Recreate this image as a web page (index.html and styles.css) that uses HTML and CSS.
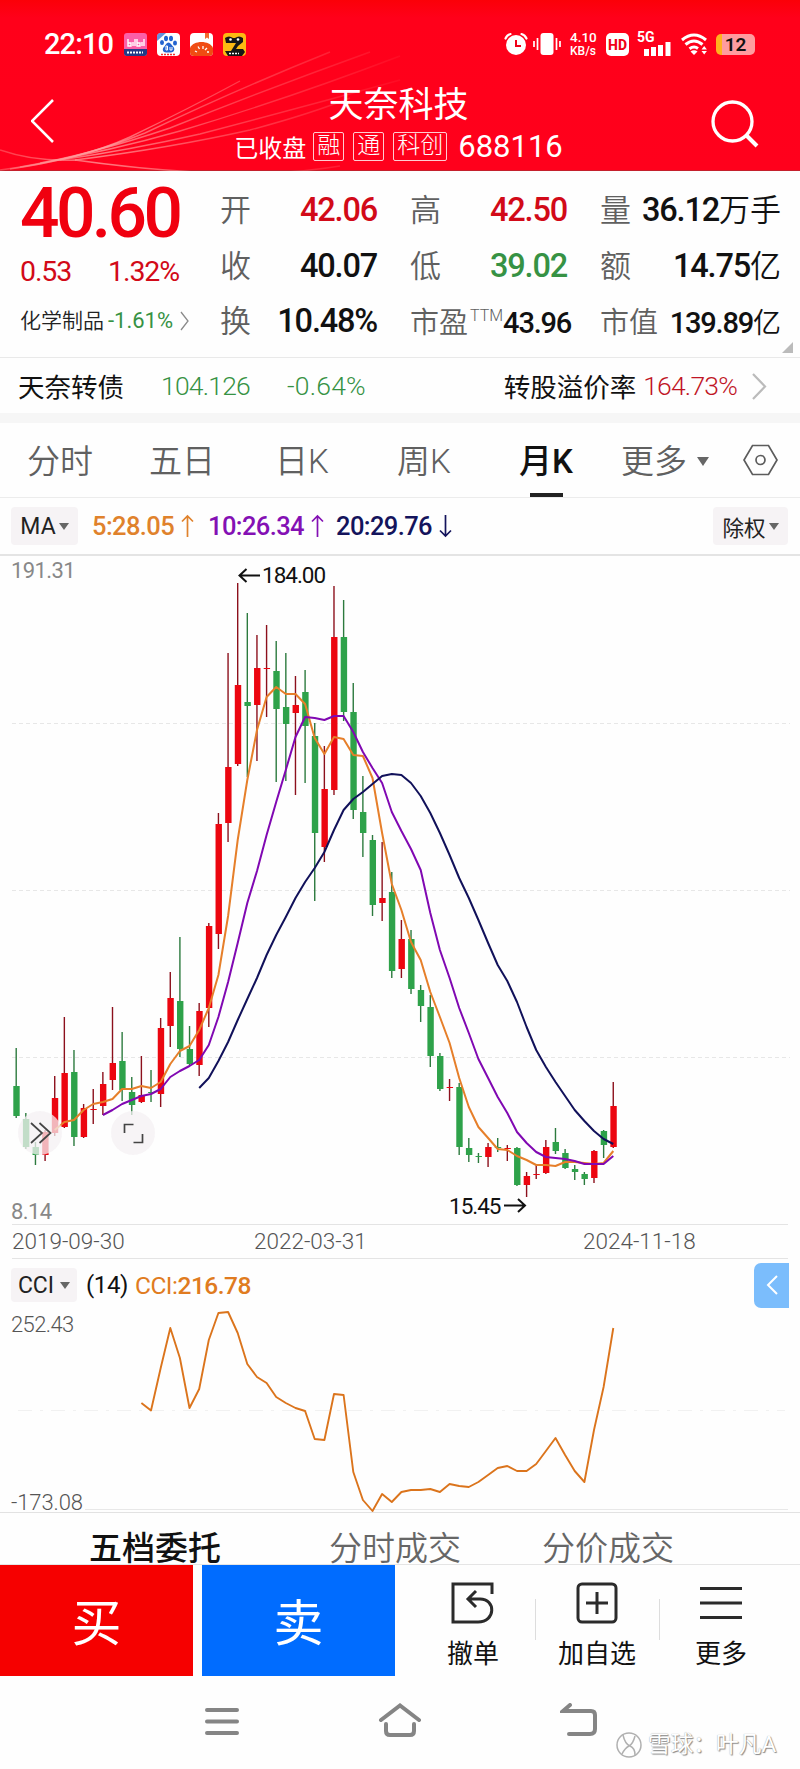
FILE: index.html
```
<!DOCTYPE html>
<html lang="zh-CN">
<head>
    <meta charset="UTF-8">
    <meta name="viewport" content="width=device-width, initial-scale=1.0">
    <title>天奈科技 688116</title>
    <link rel="stylesheet" href="styles.css">
</head>
<body>
    <header>
        <svg class="header-lines" width="800" height="171" viewBox="0 0 800 171">
            <defs>
                <linearGradient id="fade" gradientUnits="userSpaceOnUse" x1="0" y1="0" x2="400" y2="0">
                    <stop offset="0" stop-color="#ff9090" stop-opacity=".4"/>
                    <stop offset=".25" stop-color="#ffa0a0" stop-opacity=".75"/>
                    <stop offset=".6" stop-color="#ff9090" stop-opacity=".4"/>
                    <stop offset="1" stop-color="#ff9090" stop-opacity=".08"/>
                </linearGradient>
            </defs>
            <path d="M0 150 Q35 162 75 160 Q240 183 340 166"/>
            <path d="M0 170 Q80 160 130 137 Q190 108 240 81"/>
            <path d="M10 169 Q80 159 145 133 Q240 88 330 52"/>
            <path d="M20 167 Q90 155 170 128 Q270 88 370 52"/>
            <path d="M40 163 Q110 151 180 131 Q290 98 400 56"/>
            <path d="M60 160 Q130 150 200 134 Q300 108 400 80"/>
            <path d="M75 160 Q170 148 250 130 Q310 114 350 98"/>
        </svg>
        <div class="status-bar">
            <span class="time">22:10</span>
            <div class="apps">
                <svg width="23" height="23" viewBox="0 0 23 23">
                    <rect width="23" height="23" rx="3" fill="#fb5fa8"/>
                    <path d="M0 16h23v4a3 3 0 0 1-3 3H3a3 3 0 0 1-3-3z" fill="#243a86"/>
                    <path d="M4 6v7h3v-3H4M9 9v4M11 6v7M13 6v7h3v-3h-3M18 9v4M20 6v7" stroke="#fff" fill="none" stroke-width="1.4"/>
                    <path d="M3 19.500h16" stroke="#fff" stroke-width="2" stroke-dasharray="2 1"/>
                </svg>
                <svg width="23" height="23" viewBox="0 0 23 23">
                    <rect width="23" height="23" rx="4" fill="#fff"/>
                    <g fill="#2463cf">
                        <path d="M0 4a4 4 0 0 1 4-4h5L0 8z" opacity=".7"/>
                        <ellipse cx="5" cy="9.500" rx="2" ry="2.600"/>
                        <ellipse cx="9" cy="5.500" rx="2" ry="2.800"/>
                        <ellipse cx="14" cy="5.500" rx="2" ry="2.800"/>
                        <ellipse cx="18" cy="10" rx="2" ry="2.600"/>
                        <path d="M11.500 9.500c2 0 3 2.500 5 4.500 2 2.500 0 5.500-2.500 5.500H9c-3 0-4-3-2.500-5 2-2 3-5 5-5z"/>
                    </g>
                    <path d="M9 13v4h1.500v-4zM13 14v3h2v-3" fill="none" stroke="#fff"/>
                    <path d="M4 21.500h15" stroke="#e33" stroke-width="1.500" stroke-dasharray="2 1"/>
                </svg>
                <svg width="23" height="23" viewBox="0 0 23 23">
                    <rect width="23" height="23" rx="4" fill="#fff"/>
                    <path d="M15 0h4v6l-2-1.500L15 6z" fill="#f26a2c"/>
                    <path d="M0 15C3 7 20 7 23 15v4a4 4 0 0 1-4 4H4a4 4 0 0 1-4-4z" fill="#f04c12"/>
                    <path d="M5 18l2 1M8 13.500l1.500 2.500M13 13v3M17 15l-2 2M19 19h-2" stroke="#fff" stroke-width="1.300"/>
                </svg>
                <svg width="23" height="23" viewBox="0 0 23 23">
                    <rect width="23" height="23" rx="4" fill="#fdb912"/>
                    <path d="M2 5q4-3 8 0h2q4-3 8 0v4l-5 4-2 3 7 0 2 3-3 4H5l-3-5 6 0 5-8H3z" fill="#161616"/>
                    <circle cx="7.500" cy="6.500" r="1.300" fill="#fff"/>
                    <circle cx="15" cy="6.500" r="1.300" fill="#fff"/>
                    <path d="M6 20.500h10" stroke="#fff" stroke-width="1.500" stroke-dasharray="2 1"/>
                </svg>
            </div>
            <div class="system">
                <svg width="24" height="24" viewBox="0 0 24 24">
                    <circle cx="12" cy="13" r="10" fill="#fff"/>
                    <path d="M1.500 6.500Q3 3 6.500 2M17.500 2Q21 3 22.500 6.500" stroke="#fff" stroke-width="2.200" fill="none" stroke-linecap="round"/>
                    <path d="M12 8v6h5" stroke="#f00018" stroke-width="2" fill="none"/>
                </svg>
                <svg class="vibrate" width="28" height="24" viewBox="0 0 28 24">
                    <rect x="7.500" y="1" width="13" height="22" rx="3" fill="#fff"/>
                    <path d="M4.500 6v12M1 9v6M23.500 6v12M27 9v6" stroke="#fff" stroke-width="1.700"/>
                </svg>
                <div class="speed"><span>4.10</span><span>KB/s</span></div>
                <span class="hd">HD</span>
                <div class="signal">
                    <span>5G</span>
                    <svg width="27" height="14" viewBox="0 0 27 14">
                        <path d="M0 7h5v7H0zM7 5h5v9H7zM14 3h5v11h-5zM21.500 0h5v14h-5z" fill="#fff"/>
                    </svg>
                </div>
                <svg class="wifi" width="29" height="24" viewBox="0 0 29 24">
                    <path d="M2 8Q14 -2 26 8M5.500 12.500Q14 5.500 22.500 12.500M9.500 16.800Q14 13.500 18 16.500" stroke="#fff" stroke-width="3" fill="none"/>
                    <path d="M10.500 19.500Q14 17 17.500 19.500L14 23z" fill="#fff"/>
                    <path d="M21.500 17.500l2.700-3.500 2.700 3.500zM21.500 19h5.400l-2.700 3.500z" fill="#fff"/>
                </svg>
                <div class="battery">12</div>
            </div>
        </div>
        <div class="title-bar">
            <svg width="24" height="44" viewBox="0 0 24 44"><path d="M22 1L1 22l21 21" fill="none" stroke="#fff" stroke-width="2.500"/></svg>
            <div class="title">
                <h1>天奈科技</h1>
                <div class="subtitle">
                    <span>已收盘</span>
                    <i>融</i><i>通</i><i>科创</i>
                    <b>688116</b>
                </div>
            </div>
            <svg width="48" height="48" viewBox="0 0 48 48">
                <circle cx="21.500" cy="21.500" r="19.500" fill="none" stroke="#fff" stroke-width="3.300"/>
                <path d="M35 35l11 11" stroke="#fff" stroke-width="4"/>
            </svg>
        </div>
    </header>

    <section class="quote">
        <div class="price">
            <div class="last up">40.60</div>
            <div class="change up"><span>0.53</span><span>1.32%</span></div>
            <div class="sector">化学制品<span class="down">-1.61%</span>
                <svg width="9" height="20" viewBox="0 0 9 20"><path d="M1 1l7 9-7 9" fill="none" stroke="#8a8a8a" stroke-width="1.300"/></svg>
            </div>
        </div>
        <div class="stats">
            <div><label>开</label><b class="up">42.06</b></div>
            <div><label>高</label><b class="up">42.50</b></div>
            <div><label>量</label><b>36.12<em>万手</em></b></div>
            <div><label>收</label><b>40.07</b></div>
            <div><label>低</label><b class="down">39.02</b></div>
            <div><label>额</label><b>14.75<em>亿</em></b></div>
            <div><label>换</label><b>10.48%</b></div>
            <div class="small"><label>市盈<sup>TTM</sup></label><b>43.96</b></div>
            <div class="small"><label>市值</label><b>139.89<em>亿</em></b></div>
        </div>
        <span class="corner"></span>
    </section>

    <section class="bond">
        <span class="bond-name">天奈转债</span>
        <span class="bond-price down">104.126</span>
        <span class="bond-change down">-0.64%</span>
        <span class="premium">转股溢价率</span>
        <span class="premium-value">164.73%</span>
        <svg width="15" height="27" viewBox="0 0 15 27"><path d="M1 1l12 12.500L1 26" fill="none" stroke="#bbb" stroke-width="2.200"/></svg>
    </section>

    <nav class="periods">
        <span>分时</span>
        <span>五日</span>
        <span>日K</span>
        <span>周K</span>
        <span class="active">月K</span>
        <span>更多<i class="caret"></i></span>
        <svg width="35" height="32" viewBox="0 0 35 32">
            <path d="M9.500 1.500h16L34 16l-8.500 14.500h-16L1 16z" fill="none" stroke="#5c5c5c" stroke-width="1.700"/>
            <circle cx="17.500" cy="16" r="4.500" fill="none" stroke="#5c5c5c" stroke-width="1.700"/>
        </svg>
    </nav>

    <section class="ma-bar">
        <button class="chip">MA<i class="caret"></i></button>
        <span class="ma ma5">5:28.05<svg width="13" height="24" viewBox="0 0 13 24"><path d="M6.500 23V2M1 7.500L6.500 2 12 7.500"/></svg></span>
        <span class="ma ma10">10:26.34<svg width="13" height="24" viewBox="0 0 13 24"><path d="M6.500 23V2M1 7.500L6.500 2 12 7.500"/></svg></span>
        <span class="ma ma20">20:29.76<svg width="13" height="24" viewBox="0 0 13 24"><path d="M6.500 1v21M1 16.500L6.500 22l5.500-5.500"/></svg></span>
        <button class="chip right">除权<i class="caret"></i></button>
    </section>

    <svg id="kline" class="kline" width="800" height="669" viewBox="0 556 800 669">
        <path class="grid" d="M12 723.500H790M12 890.500H790M12 1057.500H790"/>
        <g id="candles"></g>
        <g id="lines"></g>
        <text class="axis" x="11" y="578">191.31</text>
        <text class="axis" x="11" y="1218.500">8.14</text>
        <path class="arrow" d="M260 575.500H239M246.500 569l-7 6.500 7 6.500"/>
        <text class="mark" x="262" y="583">184.00</text>
        <text class="mark" x="449" y="1214">15.45</text>
        <path class="arrow" d="M504 1205.500h21M518 1199l7 6.500-7 6.500"/>
        <circle class="tool" cx="40" cy="1133" r="22"/>
        <path class="tool-icon" d="M31 1123l11 10-11 10M39.500 1123l11 10-11 10"/>
        <circle class="tool" cx="133" cy="1133" r="22"/>
        <path class="tool-icon" d="M124.500 1133v-8.500h9M142.500 1134v8.500h-9"/>
    </svg>

    <div class="dates"><span>2019-09-30</span><span>2022-03-31</span><span>2024-11-18</span></div>

    <section class="cci">
        <div class="cci-bar">
            <button class="chip">CCI<i class="caret"></i></button>
            <span class="param">(14)</span>
            <span class="value">CCI:<b>216.78</b></span>
            <div class="drawer">
                <svg width="12" height="20" viewBox="0 0 12 20"><path d="M11 1L2 10l9 9" fill="none" stroke="#fff" stroke-width="2"/></svg>
            </div>
        </div>
        <svg id="cci" class="cci-chart" width="800" height="205" viewBox="0 1307 800 205">
            <path class="grid long" d="M18 1410.500H785"/>
            <path class="base" d="M85 1509.500H788"/>
            <text class="axis dark" x="11" y="1332">252.43</text>
            <text class="axis dark low" x="11" y="1509.500">-173.08</text>
        </svg>
    </section>

    <nav class="detail-tabs">
        <span class="active">五档委托</span><span>分时成交</span><span>分价成交</span>
    </nav>

    <section class="actions">
        <button class="buy">买</button>
        <button class="sell">卖</button>
        <div class="action">
            <svg width="46" height="46" viewBox="0 0 46 46"><path d="M42 14V4H3v38h25c18 0 18-23 2-23H20M26 11l-8 8 8 8"/></svg>
            <span>撤单</span>
        </div>
        <div class="action">
            <svg width="46" height="46" viewBox="0 0 46 46"><rect x="4" y="4" width="38" height="38" rx="4"/><path d="M23 12v22M12 23h22"/></svg>
            <span>加自选</span>
        </div>
        <div class="action">
            <svg width="46" height="46" viewBox="0 0 46 46"><path d="M2 8.500h42M2 23h42M2 37.500h42"/></svg>
            <span>更多</span>
        </div>
    </section>

    <footer>
        <svg width="36" height="36" viewBox="0 0 36 36"><path d="M3 7h30M3 18.500h30M3 30h30"/></svg>
        <svg width="44" height="34" viewBox="0 0 44 34"><path d="M3 17L22 2.500 41 17M8 21v7q0 4 4 4h20q4 0 4-4v-7"/></svg>
        <svg width="38" height="36" viewBox="0 0 38 36"><path d="M10 2L3 8h28q4 0 4 4v14q0 5-5 5H9"/></svg>
        <div class="watermark">
            <svg width="28" height="28" viewBox="0 0 28 28"><circle cx="14" cy="14" r="12"/><path d="M8 4q2 9 7 11t5 9M20 5q-2 8-6 10t-7 8"/></svg>
            <span>雪球：叶凡A</span>
        </div>
    </footer>

    <script>
        // [最高, 实体上沿, 实体下沿, 最低, 涨1/跌0]
        const candles = [
            [1048, 1086, 1116, 1118, 0], [1113, 1119, 1147, 1149, 0], [1142, 1147, 1155, 1165, 0], [1130, 1132, 1155, 1161, 1],
            [1076, 1098, 1133, 1136, 1], [1017, 1073, 1127, 1128, 1], [1050, 1072, 1137, 1146, 0], [1104, 1108, 1137, 1138, 1],
            [1089, 1109, 1109, 1124, 1], [1072, 1084, 1106, 1115, 1], [1007, 1063, 1080, 1090, 1], [1032, 1061, 1090, 1101, 0],
            [1077, 1092, 1105, 1115, 0], [1056, 1095, 1102, 1103, 1], [1070, 1092, 1092, 1102, 0], [1018, 1028, 1094, 1107, 1],
            [972, 998, 1026, 1047, 1], [937, 1001, 1049, 1057, 0], [1026, 1049, 1064, 1065, 0], [1003, 1011, 1065, 1076, 1],
            [923, 926, 1008, 1027, 1], [813, 824, 934, 949, 1], [653, 767, 823, 842, 1], [583, 685, 764, 766, 1],
            [613, 702, 706, 777, 0], [635, 668, 705, 761, 1], [625, 668, 668, 717, 1], [641, 671, 709, 782, 0],
            [653, 707, 724, 781, 0], [676, 705, 713, 795, 1], [670, 692, 726, 783, 0], [723, 736, 833, 901, 0],
            [746, 789, 847, 862, 1], [586, 637, 790, 795, 1], [600, 637, 712, 721, 0], [683, 712, 810, 819, 0],
            [776, 812, 833, 857, 0], [835, 840, 905, 916, 0], [842, 898, 903, 921, 1], [872, 892, 971, 978, 0],
            [920, 939, 969, 978, 1], [930, 939, 989, 994, 0], [985, 990, 1006, 1022, 0], [995, 1007, 1056, 1067, 0],
            [1053, 1056, 1089, 1091, 0], [1079, 1087, 1087, 1101, 1], [1083, 1087, 1147, 1155, 0], [1138, 1148, 1155, 1162, 0],
            [1153, 1156, 1156, 1163, 0], [1143, 1147, 1157, 1167, 1], [1138, 1147, 1147, 1152, 0], [1145, 1148, 1148, 1161, 1],
            [1147, 1148, 1185, 1186, 0], [1172, 1176, 1185, 1197, 1], [1165, 1174, 1174, 1179, 1], [1140, 1147, 1173, 1174, 1],
            [1128, 1142, 1151, 1154, 0], [1149, 1153, 1168, 1169, 0], [1165, 1169, 1172, 1180, 0], [1172, 1174, 1179, 1185, 0],
            [1150, 1151, 1178, 1183, 1], [1130, 1131, 1145, 1158, 0], [1082, 1106, 1147, 1148, 1]
        ];
        const ma5 = [1130, 1122, 1120, 1110, 1104, 1102, 1099, 1089, 1089, 1086, 1088, 1082, 1064, 1051, 1046, 1030, 1008, 975, 916, 840, 780, 730, 697, 687, 694, 694, 704, 738, 754, 737, 739, 755, 756, 778, 833, 884, 910, 942, 960, 992, 1017, 1043, 1078, 1107, 1127, 1138, 1149, 1150, 1156, 1160, 1165, 1165, 1166, 1162, 1162, 1163, 1164, 1163, 1151];
        const ma10 = [1115, 1110, 1104, 1100, 1096, 1094, 1089, 1077, 1071, 1066, 1060, 1045, 1017, 982, 943, 903, 871, 835, 802, 770, 737, 717, 718, 720, 716, 716, 732, 752, 768, 783, 812, 831, 849, 870, 913, 950, 978, 1008, 1033, 1059, 1078, 1097, 1113, 1132, 1143, 1152, 1157, 1158, 1159, 1161, 1164, 1164, 1164, 1156];
        const ma20 = [1088, 1078, 1061, 1042, 1020, 999, 978, 955, 935, 917, 898, 882, 868, 852, 830, 810, 799, 792, 784, 776, 774, 775, 783, 796, 813, 833, 855, 878, 898, 920, 943, 965, 981, 1002, 1027, 1050, 1067, 1082, 1096, 1110, 1121, 1131, 1139, 1144];
        const cci = [1403, 1410.5, 1368, 1328, 1358, 1408, 1389, 1340, 1313, 1312, 1333, 1364, 1377, 1383, 1397, 1403, 1408, 1411, 1439, 1440, 1394, 1395, 1472, 1500, 1511, 1494, 1502, 1492, 1490, 1490, 1489, 1492, 1484, 1486, 1487, 1482, 1475, 1468, 1466, 1471, 1471, 1464, 1451, 1438, 1455, 1471, 1482, 1430, 1387, 1328];

        const x = (i) => 16.2 + i * 9.63;

        let html = '';
        candles.forEach(([high, top, bottom, low, up], i) => {
            const name = up ? 'rise' : 'fall';
            html += `<path class="wick ${name}" d="M${x(i)} ${high}V${low}"/>`;
            html += `<rect class="body ${name}" x="${x(i) - 2.9}" y="${top}" width="6.4" height="${Math.max(bottom - top, 1)}"/>`;
        });
        document.getElementById('candles').innerHTML = html;

        // 均线从右侧对齐到最后一根K线
        function line(data, name) {
            const start = candles.length - data.length;
            const points = data.map((y, i) => `${x(start + i).toFixed(1)},${y}`).join(' ');
            return `<polyline class="line ${name}" points="${points}"/>`;
        }
        document.getElementById('lines').innerHTML = line(ma5, 'l5') + line(ma10, 'l10') + line(ma20, 'l20');
        document.getElementById('cci').innerHTML += line(cci, 'lcci');
    </script>
</body>
</html>
```
FILE: styles.css
```
* {
    box-sizing: border-box;
}
body {
    margin: 0;
    width: 800px;
    height: 1769px;
    overflow: hidden;
    background-color: #fefefe;
    color: #111;
    font-family: Roboto, "Noto Sans CJK SC", sans-serif;
}
svg {
    display: block;
    flex-shrink: 0;
}
button {
    border: none;
    padding: 0;
    font-family: inherit;
}
i, em {
    font-style: normal;
}
.up {
    color: #d20a18;
}
.down {
    color: #369244;
}
.caret {
    display: inline-block;
    border: 5px solid transparent;
    border-top: 7px solid #666;
    border-bottom: none;
}

/* header */
header {
    position: relative;
    height: 171px;
    background: linear-gradient(#fb0008, #ff001a 18px, #ff001c);
    border-bottom: 1px solid #c4202c;
    color: white;
}
.header-lines {
    position: absolute;
    left: 0;
    top: 0;
    fill: none;
    stroke: url(#fade);
    stroke-width: 1.4;
}
.status-bar {
    position: relative;
    display: flex;
    align-items: center;
    height: 88px;
    padding: 0 45px 0 44px;
}
.time {
    width: 80px;
    font-size: 29px;
    font-weight: 500;
    letter-spacing: -0.9px;
}
.apps {
    display: flex;
    gap: 10px;
}
.system {
    display: flex;
    align-items: center;
    margin-left: auto;
}
.vibrate {
    margin-left: 5px;
}
.speed {
    display: flex;
    flex-direction: column;
    width: 28px;
    margin-left: 9px;
    font-size: 12px;
    line-height: 14px;
    font-weight: 500;
}
.speed span:first-child {
    font-size: 13.5px;
    line-height: 13px;
}
.hd {
    width: 23px;
    height: 23px;
    margin-left: 8px;
    border-radius: 5px;
    background-color: white;
    color: #f00018;
    font-size: 14px;
    font-weight: 800;
    line-height: 24px;
    text-align: center;
}
.signal {
    width: 35px;
    height: 24px;
    margin-left: 8px;
    font-size: 14px;
    font-weight: 700;
    line-height: 11px;
}
.signal span {
    display: block;
    height: 10px;
}
.signal svg {
    margin-left: 7px;
}
.wifi {
    margin-left: 8px;
}
.battery {
    width: 39px;
    height: 21px;
    margin-left: 7px;
    border-radius: 5px;
    background: linear-gradient(90deg, #ffb21e 6px, #ff9c9f 6px);
    color: #111;
    font-size: 19px;
    font-weight: 600;
    line-height: 21px;
    text-align: center;
}
.title-bar {
    position: relative;
    display: flex;
    justify-content: space-between;
    padding: 0 41px 0 31px;
}
.title-bar > svg:first-child {
    margin-top: 11px;
}
.title-bar > svg:last-child {
    margin-top: 12px;
}
.title {
    margin-left: 31px;
    text-align: center;
}
h1 {
    margin: -4px 0 0;
    font-size: 35px;
    font-weight: 400;
    line-height: 43px;
}
.subtitle {
    display: flex;
    align-items: center;
    height: 38px;
    font-size: 24px;
}
.subtitle i {
    height: 29px;
    margin-left: 9px;
    padding: 0 3px;
    border: 1.5px solid rgba(255, 255, 255, 0.8);
    border-radius: 2px;
    font-size: 23px;
    font-weight: 300;
    line-height: 26px;
}
.subtitle span + i {
    margin-left: 7px;
}
.subtitle b {
    margin-left: 11px;
    font-size: 31px;
    font-weight: 400;
}

/* quote */
.quote {
    position: relative;
    display: flex;
    height: 187px;
    padding: 12px 0 0 20px;
    border-bottom: 1px solid #e9e9e9;
}
.price {
    width: 200px;
}
.last {
    margin-top: 1px;
    color: #f0000f;
    font-size: 69.5px;
    font-weight: 500;
    line-height: 60px;
    letter-spacing: -3.6px;
}
.change {
    display: flex;
    justify-content: space-between;
    width: 159px;
    margin-top: 10px;
    font-size: 28.5px;
    line-height: 36px;
    letter-spacing: -1.1px;
}
.sector {
    display: flex;
    align-items: center;
    margin-top: 13px;
    font-size: 21px;
    font-weight: 350;
    line-height: 36px;
    color: #222;
}
.sector span {
    margin-left: 4px;
    font-size: 22px;
    font-weight: 400;
}
.sector svg {
    margin-left: 7px;
}
.stats {
    display: grid;
    grid-template-columns: 157px 157px 181px;
    grid-auto-rows: 55.5px;
    column-gap: 33px;
}
.stats div {
    display: flex;
    justify-content: space-between;
    align-items: center;
}
.stats label {
    color: #606060;
    font-size: 31px;
    font-weight: 350;
    line-height: 55px;
}
.stats b {
    font-size: 32.5px;
    font-weight: 500;
    line-height: 55px;
    letter-spacing: -1.2px;
    white-space: nowrap;
}
.stats em {
    font-size: 31px;
    font-weight: 350;
    line-height: 1;
    letter-spacing: 0;
}
.stats .small label {
    font-size: 29px;
    padding-top: 4px;
    line-height: 51px;
    white-space: nowrap;
}
.stats .small b {
    font-size: 29px;
    padding-top: 3px;
    line-height: 52px;
}
.stats .small em {
    font-size: 28px;
}
.stats sup {
    margin-left: 2px;
    font-size: 16px;
    line-height: 0;
    vertical-align: 12px;
}
.corner {
    position: absolute;
    right: 7px;
    bottom: 4px;
    border-left: 11px solid transparent;
    border-bottom: 11px solid #bbb;
}

/* bond */
.bond {
    display: flex;
    align-items: center;
    height: 65px;
    padding: 0 33px 0 18px;
    border-bottom: 10px solid #f6f6f6;
    font-size: 26.5px;
}
.bond-name {
    width: 143px;
}
.bond-price {
    width: 126px;
    letter-spacing: -0.8px;
    font-weight: 350;
}
.bond-change {
    letter-spacing: 0.2px;
    font-weight: 350;
}
.premium {
    margin-left: auto;
}
.premium-value {
    margin: 0 15px 0 7px;
    color: #c01525;
    font-weight: 350;
    letter-spacing: -0.8px;
}
.bond svg {
    margin-top: 2px;
}

/* periods */
.periods {
    display: flex;
    align-items: center;
    height: 75px;
    padding: 0 22px 0 27px;
    border-bottom: 1px solid #ececec;
    color: #606060;
    font-size: 33px;
    font-weight: 350;
    line-height: 74px;
}
.periods span {
    width: 122px;
    height: 74px;
    padding-top: 2px;
}
.periods span:nth-child(3) {
    padding-left: 4px;
}
.periods span:nth-child(4) {
    padding-left: 4px;
}
.periods .active {
    position: relative;
    width: 106px;
    padding-left: 4px;
    color: #111;
    font-weight: 500;
}
.periods .active::after {
    content: "";
    position: absolute;
    left: 15px;
    bottom: 0;
    width: 33px;
    height: 4px;
    background-color: #222;
}
.periods .caret {
    margin-left: 10px;
    border-width: 9px 6px 0;
    vertical-align: 7px;
}

/* moving averages */
.ma-bar {
    display: flex;
    align-items: center;
    height: 58px;
    padding: 0 12px 0 11px;
    border-bottom: 2px solid #e4e4e4;
}
.chip {
    display: flex;
    align-items: center;
    justify-content: center;
    gap: 3px;
    width: 67px;
    height: 38px;
    border-radius: 4px;
    background-color: #f6f3f5;
    color: #222;
    font-size: 23px;
}
.chip.right {
    width: 75px;
    margin-left: auto;
    font-size: 21.5px;
}
.ma {
    display: flex;
    align-items: center;
    font-size: 25.5px;
    font-weight: 500;
    letter-spacing: -0.6px;
}
.ma svg {
    margin-left: 7px;
    fill: none;
    stroke: currentColor;
    stroke-width: 1.7;
}
.ma5 {
    width: 116px;
    margin-left: 14px;
    color: #e0822c;
}
.ma10 {
    width: 128px;
    color: #8410b4;
}
.ma20 {
    color: #14145c;
}

/* charts */
.grid {
    stroke: #e7e7e7;
    stroke-dasharray: 4 3;
}
.grid.long {
    stroke: #f1f1f1;
    stroke-dasharray: 14 8 3 8;
}
.base {
    stroke: #e8e8e8;
}
.wick.rise {
    stroke: #8c101c;
}
.wick.fall {
    stroke: #2c7a3e;
}
.wick {
    stroke-width: 1.4;
}
.body.rise {
    fill: #ec0610;
}
.body.fall {
    fill: #2ea24a;
}
.line {
    fill: none;
    stroke-width: 2;
    stroke-linejoin: round;
}
.l5 {
    stroke: #e67f2a;
}
.l10 {
    stroke: #8008b2;
}
.l20 {
    stroke: #11115a;
}
.lcci {
    stroke: #db741c;
    stroke-width: 1.9;
}
.axis {
    fill: #888;
    font-size: 22px;
    letter-spacing: -0.6px;
}
.axis.dark {
    fill: #555;
    font-weight: 350;
}
.axis.low {
    letter-spacing: -0.1px;
}
.mark {
    fill: #111;
    font-size: 22.5px;
    letter-spacing: -1px;
}
.arrow {
    fill: none;
    stroke: #111;
    stroke-width: 2;
}
.tool {
    fill: rgba(244, 240, 243, 0.75);
}
.tool-icon {
    fill: none;
    stroke: #444;
    stroke-width: 1.7;
}
.dates {
    display: grid;
    grid-template-columns: 242px 329px auto;
    height: 35px;
    margin: -1px 12px 0;
    border-top: 1px solid #e4e4e4;
    border-bottom: 1px solid #e4e4e4;
    color: #555;
    font-size: 22.5px;
    font-weight: 350;
    line-height: 33px;
}

/* cci */
.cci {
    height: 254px;
    border-bottom: 1px solid #e2e2e2;
}
.cci-bar {
    display: flex;
    align-items: center;
    height: 48px;
    padding: 4px 11px 0 11px;
    font-size: 24px;
}
.cci-bar .chip {
    width: 66px;
    height: 34px;
    gap: 6px;
}
.param {
    margin: 0 7px 0 9px;
    letter-spacing: -0.4px;
}
.value {
    color: #e07b20;
    font-size: 24.5px;
    letter-spacing: -0.5px;
}
.value b {
    font-weight: 500;
}
.drawer {
    display: flex;
    align-items: center;
    justify-content: center;
    width: 35px;
    height: 45px;
    margin-left: auto;
    border-radius: 7px 0 0 7px;
    background-color: #7bbdfc;
}
.cci-chart {
    overflow: visible;
}

/* bottom */
.detail-tabs {
    display: grid;
    grid-template-columns: 240px 213px auto;
    height: 52px;
    padding-left: 89px;
    border-bottom: 1px solid #e5e5e5;
    color: #666;
    font-size: 33px;
    font-weight: 350;
    line-height: 72px;
    overflow: hidden;
}
.detail-tabs .active {
    color: #111;
    font-weight: 500;
}
.actions {
    display: flex;
    height: 111px;
}
.buy, .sell {
    width: 193px;
    padding-bottom: 3px;
    color: white;
    font-size: 50px;
}
.buy {
    background-color: #f60000;
}
.sell {
    margin: 0 16px 0 9px;
    background-color: #006cff;
}
.action {
    display: flex;
    flex-direction: column;
    align-items: center;
    position: relative;
    width: 124px;
    padding-top: 15px;
    font-size: 26px;
}
.action span {
    margin-top: 8px;
    line-height: 40px;
}
.action svg {
    fill: none;
    stroke: #2b2b2b;
    stroke-width: 3;
}
.action + .action::before {
    content: "";
    position: absolute;
    left: 0;
    top: 34px;
    width: 1px;
    height: 41px;
    background-color: #ddd;
}
footer {
    position: relative;
    display: flex;
    height: 93px;
    padding: 27px 0 0 204px;
    gap: 138px;
}
footer > svg {
    fill: none;
    stroke: #858585;
    stroke-width: 4;
    stroke-linecap: round;
}
.watermark {
    position: absolute;
    left: 615px;
    top: 52px;
    display: flex;
    align-items: center;
    gap: 5px;
    color: #fff;
    font-size: 22.7px;
    line-height: 34px;
    white-space: nowrap;
    text-shadow: 1px 1px 1px #888, 0 0 1px #999;
}
.watermark svg {
    fill: none;
    stroke: #b0b0b0;
    stroke-width: 1.5;
}
```
